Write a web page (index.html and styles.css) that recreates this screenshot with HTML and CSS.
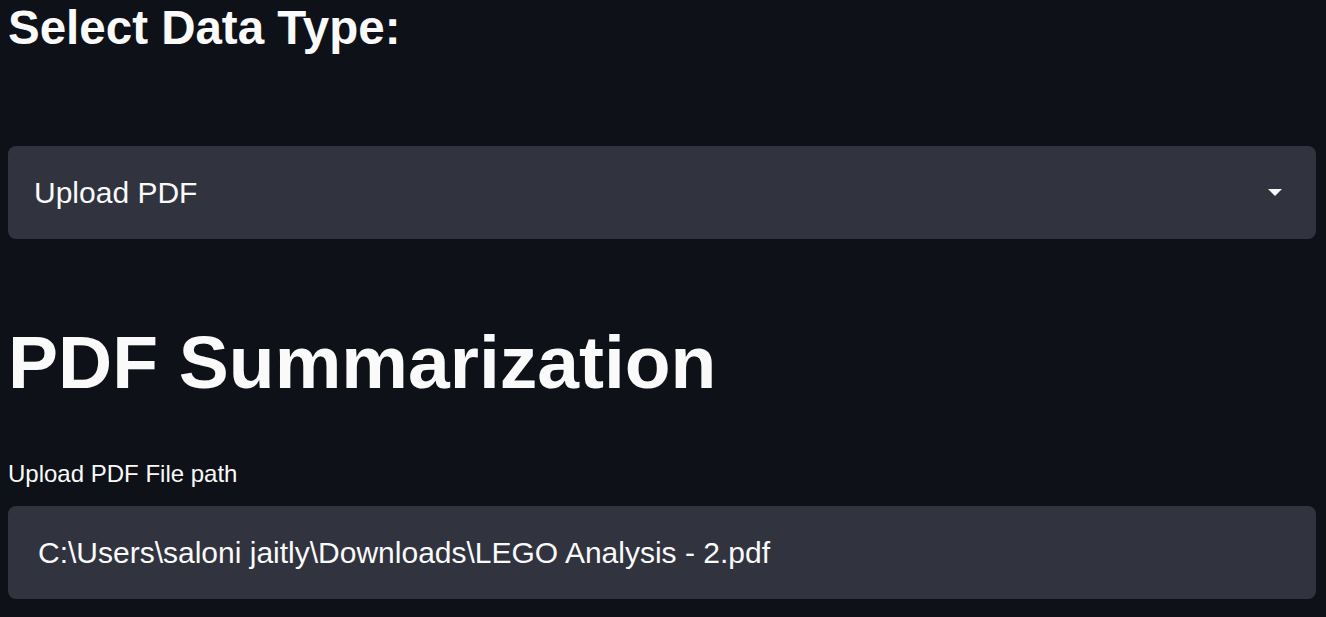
FILE: index.html
```html
<!DOCTYPE html>
<html lang="en">
<head>
<meta charset="utf-8">
<title>PDF Summarization</title>
<link rel="stylesheet" href="styles.css">
</head>
<body>
<main class="app">
  <h2 class="section-title">Select Data Type:</h2>
  <div class="select">
    <span class="select-value">Upload PDF</span>
    <svg class="caret" width="14" height="8" viewBox="0 0 14 8"><path d="M0 0 H14 L7 7 Z" fill="#fafafa"/></svg>
  </div>
  <h1 class="page-title">PDF Summarization</h1>
  <label class="field-label">Upload PDF File path</label>
  <div class="text-input">C:\Users\saloni jaitly\Downloads\LEGO Analysis - 2.pdf</div>
</main>
</body>
</html>
```

FILE: styles.css
```css
html, body {
  margin: 0;
  padding: 0;
  background: #0e1117;
  color: #fafafa;
  font-family: "Liberation Sans", Arial, sans-serif;
}
.app {
  padding: 0 10px 0 8px;
  display: flex;
  flex-direction: column;
}
.section-title {
  margin: 0;
  font-size: 47.5px;
  line-height: 55px;
  font-weight: 700;
}
.select {
  margin-top: 91px;
  height: 93px;
  background: #31333f;
  border-radius: 8px;
  display: flex;
  align-items: center;
  justify-content: space-between;
  padding: 0 34px 0 26px;
}
.select-value {
  font-size: 30px;
}
.caret {
  display: block;
}
.page-title {
  margin: 78px 0 0;
  font-size: 75px;
  line-height: 90px;
  font-weight: 700;
}
.field-label {
  margin-top: 53px;
  font-size: 24px;
  line-height: 28px;
}
.text-input {
  margin-top: 18px;
  height: 93px;
  background: #31333f;
  border-radius: 8px;
  display: flex;
  align-items: center;
  padding: 0 30px;
  font-size: 30px;
}
```
